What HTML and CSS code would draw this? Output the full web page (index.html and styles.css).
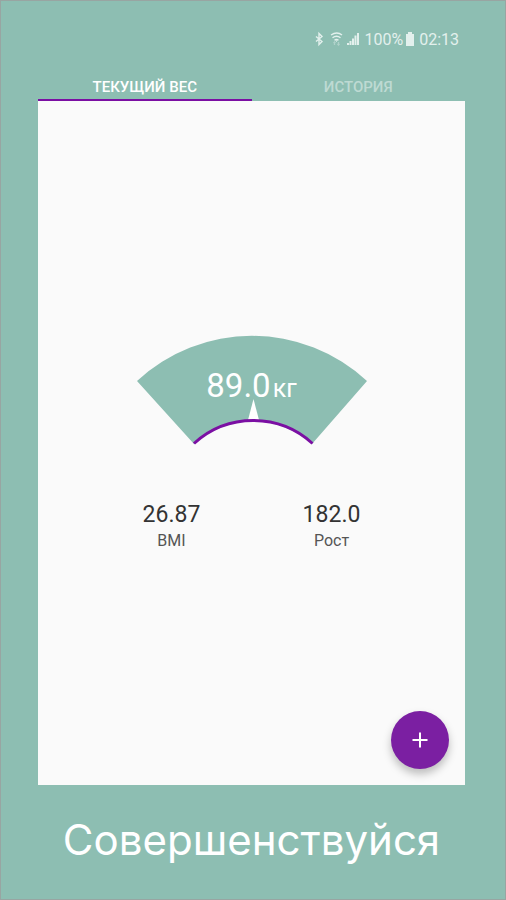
FILE: index.html
```html
<!DOCTYPE html>
<html lang="ru">
<head>
<meta charset="utf-8">
<meta name="viewport" content="width=device-width, initial-scale=1">
<title>Текущий вес</title>
<link rel="stylesheet" href="styles.css">
</head>
<body>
<div class="page">
  <header class="status">
    <svg class="status-icons" viewBox="0 0 48 16" aria-hidden="true">
      <path class="line" d="M3 5.500l6 5-3 3v-11l3 3-6 5"/>
      <g class="line">
        <path d="M18 4q6-4 11 0M19.500 6.700q4-3 8 0M21.500 9.200q2-1.500 4 0"/>
        <path class="faint" d="M21.500 11v3M20.500 12l1-1 1 1M25.500 11v3M24.500 13l1 1 1-1"/>
      </g>
      <path class="solid" d="M22.500 9.500h2l-1 1.500zM34 12h2v2h-2zM36.500 10h2v4h-2zM39 7.500h2V14h-2zM41.500 4.500h2V14h-2zM44 2h2v12h-2z"/>
    </svg>
    <span class="battery-level">100%</span>
    <svg class="battery" viewBox="0 0 10 14" aria-hidden="true"><path class="solid" d="M3 0h4v2h2v12H1V2h2z"/></svg>
    <time>02:13</time>
  </header>
  <nav class="tabs">
    <a class="tab active" href="#weight" aria-current="page">ТЕКУЩИЙ ВЕС</a>
    <a class="tab" href="#history">ИСТОРИЯ</a>
  </nav>
  <main class="panel" id="weight">
    <section class="gauge">
      <svg class="dial" viewBox="0 0 232 112" aria-hidden="true">
        <path class="sector" d="M1 46A169 169 0 0 1 231 46L176 109A88 88 0 0 0 58 109Z"/>
        <path class="needle" d="M117.500 64L123 85H112z"/>
        <path class="scale" d="M58 108.500A88 88 0 0 1 176.500 108.500"/>
      </svg>
      <p class="weight">89.0<span class="unit">кг</span></p>
    </section>
    <dl class="stats">
      <div class="stat"><dt>BMI</dt><dd>26.87</dd></div>
      <div class="stat"><dt>Рост</dt><dd>182.0</dd></div>
    </dl>
    <button class="add" type="button" aria-label="Добавить">
      <svg viewBox="0 0 24 24" aria-hidden="true"><path d="M12 4.500v15M4.500 12h15"/></svg>
    </button>
  </main>
  <h1 class="slogan">Совершенствуйся</h1>
</div>
</body>
</html>
```
FILE: styles.css
```css
* { box-sizing: border-box; margin: 0; }

body {
  background: #8dbeb2;
  color: #fff;
  font-family: Roboto, "Noto Sans", sans-serif;
}

.page {
  display: flex;
  flex-direction: column;
  min-height: 100vh;
  padding: 26px 40px 33px 37px;
  border: 1px solid #98a5a2;
}

.status {
  display: flex;
  align-items: center;
  justify-content: flex-end;
  height: 24px;
  padding-right: 6px;
  font-size: 16px;
  color: #e3f0ed;
}

.status-icons { width: 48px; height: 16px; margin-right: 3px; }
.battery { width: 10px; height: 14px; margin: 0 4px 0 2px; }
.line { fill: none; stroke: #e3f0ed; stroke-width: 1.4; }
.faint { opacity: 0.4; }
.solid { fill: #e3f0ed; }

.tabs { display: flex; margin-top: 22px; }

.tab {
  flex: 1;
  height: 28px;
  border-bottom: 2px solid transparent;
  color: #bedad3;
  font-size: 15px;
  font-weight: 500;
  line-height: 28px;
  text-align: center;
  text-decoration: none;
}

.tab.active { border-color: #7b0fa3; color: #fff; }

.panel {
  display: flex;
  flex: 1;
  flex-direction: column;
  padding: 234px 16px 16px;
  background: #fafafa;
}

.gauge { display: grid; justify-content: center; }
.dial, .weight { grid-area: 1 / 1; }
.dial { width: 232px; height: 112px; }
.sector { fill: #8dbeb2; }
.needle { fill: #fff; }
.scale { fill: none; stroke: #7b0fa3; stroke-width: 3; }

.weight {
  padding-top: 31px;
  font-size: 33px;
  line-height: 40px;
  text-align: center;
}

.unit { margin-left: 2px; font-size: 25px; }

.stats {
  display: flex;
  justify-content: center;
  gap: 64px;
  margin-top: 54px;
}

.stat {
  display: flex;
  flex-direction: column-reverse;
  width: 96px;
  text-align: center;
}

dd { color: #333; font-size: 23px; line-height: 28px; }
dt { color: #555; font-size: 16px; line-height: 24px; }

.add {
  display: grid;
  place-items: center;
  width: 58px;
  height: 58px;
  margin: auto 0 0 auto;
  padding: 0;
  border: 0;
  border-radius: 50%;
  background: #7b1fa2;
  box-shadow: 0 5px 8px rgba(0, 0, 0, 0.25);
}

.add svg { width: 24px; height: 24px; stroke: #fff; stroke-width: 2; }

.slogan {
  margin-top: 29px;
  font-family: Inter, sans-serif;
  font-size: 42px;
  font-weight: 400;
  line-height: 52px;
  text-align: center;
}
```
